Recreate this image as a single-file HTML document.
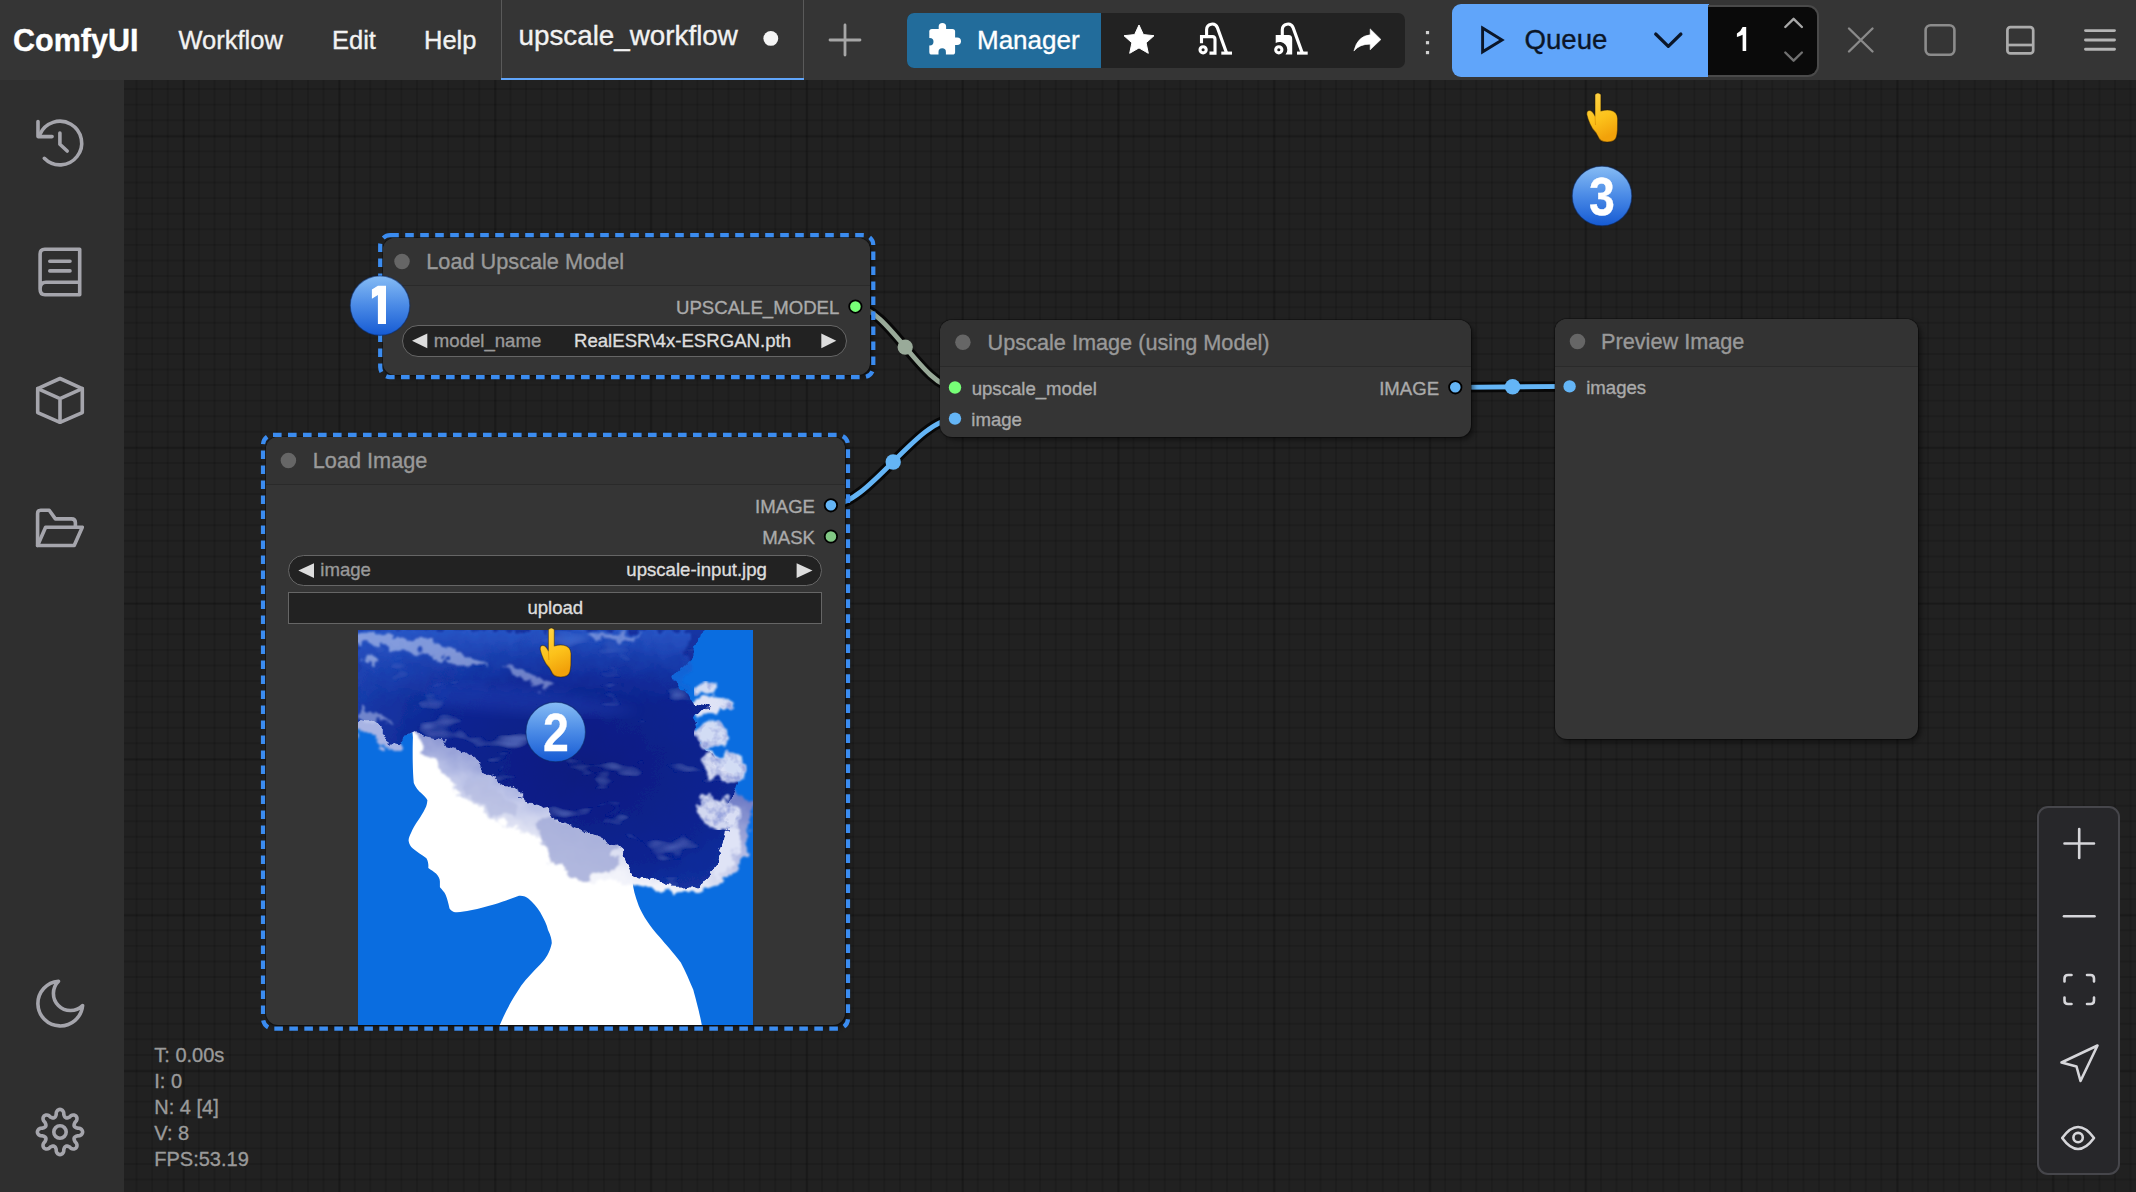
<!DOCTYPE html>
<html><head><meta charset="utf-8">
<style>
html,body{margin:0;padding:0;}
body{width:2136px;height:1192px;overflow:hidden;position:relative;background:#212121;font-family:"Liberation Sans",sans-serif;}
.a{position:absolute;box-sizing:border-box;}
.t{position:absolute;white-space:pre;font-family:"Liberation Sans",sans-serif;-webkit-text-stroke:0.35px currentColor;}
.dg{transform:scaleX(0.86);}
#header{left:0;top:0;width:2136px;height:80px;background:#353535;}
#sidebar{left:0;top:80px;width:124px;height:1112px;background:#2f2f2f;}
#canvas{left:124px;top:80px;width:2012px;height:1112px;background-color:#212121;
  background-image:
   linear-gradient(to right, rgba(0,0,0,0.15) 0, rgba(0,0,0,0.15) 1.6px, transparent 1.6px),
   linear-gradient(to bottom, rgba(0,0,0,0.15) 0, rgba(0,0,0,0.15) 1.6px, transparent 1.6px),
   linear-gradient(to right, rgba(0,0,0,0.12) 0, rgba(0,0,0,0.12) 1.6px, transparent 1.6px),
   linear-gradient(to bottom, rgba(0,0,0,0.12) 0, rgba(0,0,0,0.12) 1.6px, transparent 1.6px);
  background-size:155.8px 155.8px,155.8px 155.8px,15.58px 15.58px,15.58px 15.58px;
  background-position:59px 0, 0 55.7px, 11.6px 0, 0 8.1px;
}
.node{position:absolute;box-sizing:border-box;background:#353535;border-radius:12px;box-shadow:0 0 0 1px rgba(0,0,0,0.3),3px 3px 5px rgba(0,0,0,0.45);overflow:hidden;}
.node .title{position:absolute;left:0;top:0;right:0;background:#333333;border-bottom:1.6px solid #2a2a2a;box-sizing:border-box;}
.wcombo{position:absolute;box-sizing:border-box;background:#222222;border:1.6px solid #666666;border-radius:16px;}
.wbtn{position:absolute;box-sizing:border-box;background:#222222;border:1.6px solid #666666;}
</style></head>
<body>
<div id="header" class="a"></div>
<div id="sidebar" class="a"></div>
<div id="canvas" class="a"></div>

<!-- tab borders -->
<div class="a" style="left:500.5px;top:0;width:1.3px;height:80px;background:#5a5a5a"></div>
<div class="a" style="left:803.2px;top:0;width:1.3px;height:80px;background:#5a5a5a"></div>
<div class="a" style="left:501px;top:77.6px;width:303px;height:2.4px;background:#60a5fa"></div>

<!-- manager group -->
<div class="a" style="left:907px;top:13px;width:498px;height:55px;background:#222222;border-radius:7px"></div>
<div class="a" style="left:907px;top:13px;width:194px;height:55px;background:#226c9b;border-radius:7px 0 0 7px"></div>
<!-- queue -->
<div class="a" style="left:1452px;top:4px;width:257px;height:73px;background:#60a5fa;border-radius:9px 0 0 9px"></div>
<div class="a" style="left:1708px;top:4.5px;width:111px;height:72px;background:#0a0a0a;border:2.2px solid #4a4a4a;border-left:none;border-radius:0 11px 11px 0"></div>

<!-- LINKS (under nodes) -->
<svg class="a" style="left:0;top:0" width="2136" height="1192" viewBox="0 0 2136 1192">
 <g fill="none" stroke-linecap="round">
  <path d="M855.4 306.6 C887.4 306.6 923 387.5 955 387.5" stroke="#000" stroke-opacity="0.75" stroke-width="10.5"/>
  <path d="M855.4 306.6 C887.4 306.6 923 387.5 955 387.5" stroke="#99aa99" stroke-width="4.8"/>
  <path d="M830.9 505.3 C868.6 505.3 917.3 418.6 955 418.6" stroke="#000" stroke-opacity="0.75" stroke-width="10.5"/>
  <path d="M830.9 505.3 C868.6 505.3 917.3 418.6 955 418.6" stroke="#64b5f6" stroke-width="4.8"/>
  <path d="M1455.3 387.3 L1569.6 386.4" stroke="#000" stroke-opacity="0.75" stroke-width="10.5"/>
  <path d="M1455.3 387.3 L1569.6 386.4" stroke="#64b5f6" stroke-width="4.8"/>
 </g>
 <circle cx="905.2" cy="347.1" r="7.7" fill="#99aa99"/>
 <circle cx="893.2" cy="462" r="7.7" fill="#64b5f6"/>
 <circle cx="1512.6" cy="386.8" r="7.7" fill="#64b5f6"/>
</svg>

<!-- NODES -->
<div class="node" style="left:383px;top:238px;width:487px;height:137px"><div class="title" style="height:48.4px"></div></div>
<div class="node" style="left:940px;top:319.5px;width:530.5px;height:117.5px"><div class="title" style="height:47.6px"></div></div>
<div class="node" style="left:1554.5px;top:318.5px;width:363.5px;height:420px"><div class="title" style="height:48px"></div></div>
<div class="node" style="left:266px;top:437.3px;width:579px;height:587.7px"><div class="title" style="height:47.6px"></div></div>

<!-- widgets -->
<div class="wcombo" style="left:402px;top:325px;width:444.7px;height:32px"></div>
<div class="wcombo" style="left:288.2px;top:554.8px;width:533.7px;height:31.7px"></div>
<div class="wbtn" style="left:288.2px;top:592.4px;width:534.1px;height:31.9px"></div>

<!-- image -->
<svg class="a" style="left:358px;top:630px" width="395" height="395" viewBox="0 0 395 395">
 <defs>
  <clipPath id="pclip"><rect width="395" height="395"/></clipPath>
  <filter id="rough" x="-10%" y="-10%" width="120%" height="120%">
   <feTurbulence type="fractalNoise" baseFrequency="0.045" numOctaves="4" seed="4" result="n"/>
   <feDisplacementMap in="SourceGraphic" in2="n" scale="24" xChannelSelector="R" yChannelSelector="G"/>
  </filter>
  <filter id="rough2" x="-10%" y="-10%" width="120%" height="120%">
   <feTurbulence type="fractalNoise" baseFrequency="0.07" numOctaves="4" seed="11" result="n"/>
   <feDisplacementMap in="SourceGraphic" in2="n" scale="20" xChannelSelector="R" yChannelSelector="G" result="d"/>
   <feGaussianBlur in="d" stdDeviation="1.2"/>
  </filter>
  <filter id="soft"><feGaussianBlur stdDeviation="6"/></filter>
  <linearGradient id="topfade" x1="0" y1="0" x2="0" y2="1">
   <stop offset="0" stop-color="#2c5fd0" stop-opacity="0.75"/>
   <stop offset="0.5" stop-color="#2452c4" stop-opacity="0.35"/>
   <stop offset="1" stop-color="#1c40b0" stop-opacity="0"/>
  </linearGradient>
  <filter id="tex" x="0" y="0" width="100%" height="100%">
   <feTurbulence type="fractalNoise" baseFrequency="0.09" numOctaves="3" seed="3" result="n"/>
   <feColorMatrix in="n" type="matrix" values="0 0 0 0 0.30  0 0 0 0 0.36  0 0 0 0 0.72  0 0 0 -3 1.75" result="c"/>
   <feComposite in="c" in2="SourceAlpha" operator="in" result="ci"/>
   <feMerge><feMergeNode in="SourceGraphic"/><feMergeNode in="ci"/></feMerge>
  </filter>
  <filter id="tex2" x="0" y="0" width="100%" height="100%">
   <feTurbulence type="fractalNoise" baseFrequency="0.018 0.04" numOctaves="3" seed="7" result="n"/>
   <feColorMatrix in="n" type="matrix" values="0 0 0 0 0.14  0 0 0 0 0.22  0 0 0 0 0.66  0 0 0 -2.2 0.80" result="c"/>
   <feComposite in="c" in2="SourceAlpha" operator="in" result="ci"/>
   <feMerge><feMergeNode in="SourceGraphic"/><feMergeNode in="ci"/></feMerge>
  </filter>
  <linearGradient id="lz" x1="0" y1="1" x2="0.6" y2="0">
   <stop offset="0" stop-color="#ffffff"/>
   <stop offset="0.35" stop-color="#f2f3fa"/>
   <stop offset="0.6" stop-color="#b4bce4"/>
   <stop offset="0.85" stop-color="#6f7cc6"/>
   <stop offset="1" stop-color="#3a4cae"/>
  </linearGradient>
  <radialGradient id="cg" cx="0.6" cy="0.55" r="0.65">
   <stop offset="0" stop-color="#071a80"/>
   <stop offset="0.6" stop-color="#0c2592"/>
   <stop offset="1" stop-color="#1a3cab"/>
  </radialGradient>
 </defs>
 <g clip-path="url(#pclip)">
 <rect width="395" height="395" fill="#0a6de0"/>
 <path d="M54 96 L54.9 107.6 C54.5 120 54.5 140 55.8 153 C58 158 60 160 62.6 162.6 C66 166 68.5 168 69.4 170.3 C69 174 68.5 176 67.4 178 C65 183 63 186 60.7 189.6 C57 195 54.5 199 53 203.1 C51.5 206 50.5 208.5 50.6 210.8 C51 214 52.5 216.5 54.9 218.6 C59 222 64 225 68.4 228.2 C70.5 232 70.5 235 70.3 237.9 C73 240 76 241.5 78 243.6 C80.5 246.5 81.9 249 81.9 251.4 L81.9 257.2 C84 259.5 86.5 262 87.7 264.9 C89.5 269 90.5 274 91.5 278.4 C93.5 281 95.5 282 97.3 282.2 C102 282.5 107 281.5 112.8 280.3 C122 278.5 128 276.5 135.9 274.5 C145 272 153 268.5 161 265.8 C165 265.5 168 266.5 170.6 268.7 C175 272.5 179 277 182.2 282.2 C186 289 189 295 190 300 C193 306 194 311 193.7 313.6 C192 322 188 329 182.2 334.6 C175 342 169 348 163.3 355.6 C155 368 148 380 141.4 396 L344 396 C341 380 338 370 335.3 359.8 C331 350 328 342 322.8 332.5 C315 322 308 315 301.8 307.3 C292 296 285 286 280.8 275.9 C277 266 275 258 274.5 250.7 L240 200 L130 110 L70 92 Z" fill="#ffffff"/>
 <!-- light cloud zone -->
 <g><g filter="url(#rough2)">
  <path d="M50 98 C60 104 68 122 80 140 C95 158 110 172 130 184 C150 196 170 204 185 212 C195 222 200 236 209 246 C225 252 245 250 265 250 C280 252 285 258 295 260 C315 264 335 266 355 256 C372 246 385 232 390 212 L395 170 L300 150 L170 130 L90 100 Z" fill="url(#lz)"/>
  <path d="M0 70 C15 72 30 80 42 92 C45 100 44 112 40 120 C30 118 18 112 0 100 Z" fill="#a8b4e4"/>
  <path d="M178 196 C200 182 238 186 258 204 C266 224 252 246 226 249 C204 247 188 230 178 196 Z" fill="#a3abd8" opacity="0.85"/>
  <path d="M110 150 C130 150 150 165 160 185 C145 190 125 178 110 165 Z" fill="#b3bae0" opacity="0.7"/>
  <path d="M345 160 C360 170 372 190 380 205 C378 225 372 238 360 250 C352 240 346 225 340 205 Z" fill="#dfe3f6"/>
  <path d="M330 70 C345 62 360 65 368 72 C362 82 350 88 338 86 Z" fill="#dfe3f6"/>
  <path d="M350 120 C360 125 368 140 368 150 C360 148 352 140 345 128 Z" fill="#dfe3f6"/>
 </g></g>
 <!-- dark cloud -->
 <g filter="url(#tex2)"><g filter="url(#rough)">
  <path d="M-10 -10 L346 -10 C348 5 344 15 338 24 C330 32 320 38 316 45 C318 55 325 63 330 67 C338 70 345 68 350 72 C345 78 340 82 337 88 C338 98 341 108 343 115 C350 126 356 134 362 140 C370 144 378 143 380 150 C378 156 376 162 372 170 C372 180 374 190 372 200 C370 212 368 222 360 230 C352 240 345 252 336 258 C325 261 312 260 302 257 C296 254 293 250 288 249 C280 249 275 244 272 234 C268 220 250 210 235 204 C215 198 200 188 186 177 C170 168 155 158 144 150 C130 138 118 126 104 116 C90 110 75 108 62 104 C56 103 52 104 48 106 C44 110 42 116 40 118 C30 112 20 104 10 98 C5 95 0 93 -10 92 Z" fill="url(#cg)"/>
 </g></g>
 <rect x="0" y="0" width="330" height="75" fill="url(#topfade)" filter="url(#rough2)"/>
 <!-- right puffs -->
 <g filter="url(#tex)"><g filter="url(#rough2)" fill="#dde2f6" opacity="0.95">
  <path d="M336 56 C345 49 358 51 362 58 C356 64 345 64 336 61 Z"/>
  <path d="M361 70 C368 66 377 69 378 75 C371 80 364 79 361 74 Z"/>
  <path d="M336 100 C345 90 362 94 368 105 C370 113 363 121 350 119 C341 113 336 107 336 100 Z"/>
  <path d="M344 128 C360 120 382 125 390 135 C392 146 381 151 365 149 C351 146 344 139 344 128 Z"/>
  <path d="M336 174 C350 166 377 168 384 181 C382 193 371 201 355 199 C344 193 336 184 336 174 Z"/>
 </g></g>
 <!-- highlights -->
 <g filter="url(#rough2)" opacity="0.5">
  <path d="M0 3 C20 5 45 8 66 11 C85 14 105 22 128 38 C120 41 100 32 80 26 C55 20 30 16 0 13 Z" fill="#dfe5fa"/>
  <path d="M150 36 C165 40 180 46 195 56 C188 60 172 54 156 46 Z" fill="#c9d2f2"/>
  <path d="M225 2 C245 4 265 6 285 3 C276 11 256 13 236 9 Z" fill="#b8c4ee"/>
  <path d="M0 74 C10 77 20 85 30 95 C20 95 10 91 0 87 Z" fill="#c9d2f2"/>
  <path d="M6 26 C12 24 18 26 20 30 C15 33 9 32 6 29 Z" fill="#e6ebfb"/>
 </g>
 <g opacity="0.35" filter="url(#soft)">
  <path d="M70 55 C120 50 200 60 280 80 C250 90 160 85 80 75 Z" fill="#2a48c0"/>
 </g>
 </g>
</svg>

<!-- DOTS, ARROWS, SELECTION, ICONS -->
<svg class="a" style="left:0;top:0" width="2136" height="1192" viewBox="0 0 2136 1192">
 <!-- title dots -->
 <g fill="#666666">
  <circle cx="402" cy="261.6" r="7.75"/>
  <circle cx="962.9" cy="342.3" r="7.75"/>
  <circle cx="1577.5" cy="341.4" r="7.75"/>
  <circle cx="288.4" cy="460.5" r="7.75"/>
 </g>
 <!-- slots -->
 <circle cx="855.4" cy="306.6" r="6.2" fill="#77ff77" stroke="#000" stroke-width="1.8"/>
 <circle cx="955" cy="387.5" r="6.2" fill="#77ff77"/>
 <circle cx="955" cy="418.6" r="6.2" fill="#64b5f6"/>
 <circle cx="1455.3" cy="387.3" r="6.2" fill="#64b5f6" stroke="#000" stroke-width="1.8"/>
 <circle cx="1569.6" cy="386.4" r="6.2" fill="#64b5f6"/>
 <circle cx="830.9" cy="505.3" r="6.2" fill="#64b5f6" stroke="#000" stroke-width="1.8"/>
 <circle cx="830.9" cy="536.5" r="6.2" fill="#81c784" stroke="#000" stroke-width="1.8"/>
 <!-- combo arrows -->
 <g fill="#dddddd">
  <path d="M412 340.8 L427.3 333.4 L427.3 348.3 Z"/>
  <path d="M836.3 340.8 L821.3 333.4 L821.3 348.3 Z"/>
  <path d="M298.3 570.6 L314 563.2 L314 578 Z"/>
  <path d="M812.5 570.6 L796.6 563.2 L796.6 578 Z"/>
 </g>
 <!-- selection outlines -->
 <g fill="none" stroke="#3b8cf0" stroke-width="4.2" stroke-dasharray="8.6 6.4" stroke-linecap="butt">
  <rect x="380.2" y="235.1" width="493.1" height="142" rx="10"/>
  <rect x="263" y="434.9" width="585" height="593.7" rx="10"/>
 </g>
</svg>


<!-- HEADER ICONS -->
<svg class="a" style="left:0;top:0" width="2136" height="80" viewBox="0 0 2136 80">
 <!-- tab dot -->
 <circle cx="770.8" cy="38.4" r="7.4" fill="#f5f5f5"/>
 <!-- plus -->
 <path d="M845 25 V55 M830 40 H860" stroke="#a6a6a6" stroke-width="2.8" stroke-linecap="round" fill="none"/>
 <!-- puzzle -->
 <g fill="#ffffff">
  <rect x="929.3" y="28.9" width="25.8" height="25.6" rx="2.6"/>
  <path d="M938.7 29.5 V26.6 A3.7 3.7 0 0 1 946.1 26.6 V29.5 Z"/>
  <path d="M954.5 37.6 H957.2 A3.75 3.75 0 0 1 957.2 45.1 H954.5 Z"/>
 </g>
 <g fill="#226c9b">
  <circle cx="929.8" cy="41.8" r="3.7"/>
  <path d="M938.5 55 V52 A3.7 3.7 0 0 1 945.9 52 V55 Z"/>
 </g>
 <!-- star -->
 <path d="M1139 25 L1143.4 34.6 L1154 35.7 L1146.1 42.8 L1148.3 53.3 L1139 47.9 L1129.7 53.3 L1131.9 42.8 L1124 35.7 L1134.6 34.6 Z" fill="#ffffff" stroke="#ffffff" stroke-width="1" stroke-linejoin="round"/>
 <!-- vacuum 1 -->
 <g fill="none" stroke="#ffffff" stroke-width="3.1" stroke-linejoin="miter">
  <circle cx="1203.1" cy="49.8" r="3.1"/>
  <path d="M1201.5 43.2 V36.6 H1212.5 Q1215 36.6 1215 39.6 V53.1 H1209.5"/>
  <path d="M1206.6 36.6 V29.5 A5.6 5.6 0 0 1 1217.4 27.6 L1226.6 53.1"/>
  <path d="M1221.3 53.1 H1232"/>
 </g>
 <!-- vacuum 2 -->
 <g transform="translate(75.7 0)">
  <g fill="none" stroke="#ffffff" stroke-width="3.1">
   <circle cx="1203.1" cy="49.8" r="3.1"/>
   <path d="M1206.6 36.6 V29.5 A5.6 5.6 0 0 1 1217.4 27.6 L1226.6 53.1"/>
   <path d="M1221.3 53.1 H1232"/>
  </g>
  <path d="M1200 35.1 H1213 Q1216.5 35.1 1216.5 39 V54.6 H1209.8 A7.7 7.7 0 0 0 1200 43 Z" fill="#ffffff"/>
 </g>
 <!-- share -->
 <path d="M1380.9 39.5 L1370.2 28.9 V34.8 Q1357.5 36 1353.9 51 Q1360 43.8 1370.2 44.2 V49.8 Z" fill="#ffffff" stroke="#ffffff" stroke-width="0.6" stroke-linejoin="round"/>
 <!-- vertical dots -->
 <g fill="#d0d0d0">
  <rect x="1425.9" y="31" width="3.2" height="3.2"/>
  <rect x="1425.9" y="41.1" width="3.2" height="3.2"/>
  <rect x="1425.9" y="51" width="3.2" height="3.2"/>
 </g>
 <!-- play -->
 <path d="M1482.6 28 L1502 39.9 L1482.6 51.8 Z" fill="none" stroke="#0b1628" stroke-width="2.9" stroke-linejoin="miter"/>
 <!-- chevron down -->
 <path d="M1655.7 34 L1668.3 46.3 L1680.9 34" fill="none" stroke="#0b1628" stroke-width="3.2" stroke-linecap="round" stroke-linejoin="round"/>
 <!-- number up/down -->
 <path d="M1785.3 27 L1793.6 18.8 L1801.9 27" fill="none" stroke="#a8a8a8" stroke-width="2.4" stroke-linecap="round" stroke-linejoin="round"/>
 <path d="M1785.3 52.5 L1793.6 60.7 L1801.9 52.5" fill="none" stroke="#707070" stroke-width="2.4" stroke-linecap="round" stroke-linejoin="round"/>
 <!-- x -->
 <path d="M1849 28.5 L1872.5 51.5 M1872.5 28.5 L1849 51.5" stroke="#8a8a8a" stroke-width="2.4" stroke-linecap="round"/>
 <!-- square -->
 <rect x="1925.6" y="25.3" width="28.8" height="29.4" rx="5" fill="none" stroke="#8c8c8c" stroke-width="2.6"/>
 <!-- panel -->
 <rect x="2007.4" y="27.2" width="25.8" height="26.2" rx="3" fill="none" stroke="#acacac" stroke-width="2.7"/>
 <path d="M2007.4 45 H2033.2" stroke="#acacac" stroke-width="2.7"/>
 <!-- hamburger -->
 <path d="M2085.5 30.6 H2114.5 M2085.5 40 H2114.5 M2085.5 49.3 H2114.5" stroke="#b4b4b4" stroke-width="2.9" stroke-linecap="round"/>
</svg>

<!-- SIDEBAR ICONS -->
<svg class="a" style="left:0;top:80px" width="124" height="1112" viewBox="0 80 124 1112">
 <g fill="none" stroke="#a5a5ac" stroke-width="3.6" stroke-linecap="round" stroke-linejoin="round">
  <!-- history -->
  <path d="M39.8 134.6 A21.8 21.8 0 1 1 44.3 158.3"/>
  <path d="M38 121.5 V136.6 H52.1"/>
  <path d="M59.9 133.1 V144.2 L67.2 151"/>
  <!-- book -->
  <path d="M40.1 289 V254 Q40.1 249.3 44.8 249.3 H79.7 V294.8 H45 Q40.1 294.8 40.1 289 Q40.1 282.2 46 282.2 H79.7"/>
  <path d="M49.8 261.2 H70 M49.8 270.9 H70"/>
  <!-- cube -->
  <path d="M60 378.5 L82.3 388.6 V412.6 L60 422.3 L37.7 412.6 V388.6 Z"/>
  <path d="M37.7 388.6 L60 398.6 L82.3 388.6 M60 398.6 V422.3"/>
  <!-- folder open -->
  <path d="M37.6 545.5 V513.5 Q37.6 510.3 40.8 510.3 H49.2 L55.4 518.9 H71.5 Q75.4 518.9 75.4 522.8 V526.2"/>
  <path d="M37.6 545.5 H74.2 L82.3 527.2 H45.6 Z"/>
  <!-- moon -->
  <path d="M58.5 981.2 A15 15 0 0 0 82.6 1005.6 A22.4 22.4 0 1 1 58.5 981.2 Z"/>
  <!-- cog -->
  <circle cx="60" cy="1132" r="6.2"/>
  <path d="M60.00 1109.40 L60.71 1109.48 L61.40 1109.72 L62.07 1110.12 L62.69 1110.69 L63.25 1111.48 L63.69 1112.66 L63.86 1114.74 L64.19 1115.69 L64.53 1116.39 L64.89 1116.94 L65.27 1117.37 L65.68 1117.67 L66.12 1117.85 L66.62 1117.93 L67.19 1117.90 L67.83 1117.76 L68.57 1117.50 L69.47 1117.07 L71.06 1115.72 L72.21 1115.19 L73.16 1115.03 L74.01 1115.07 L74.76 1115.25 L75.42 1115.58 L75.98 1116.02 L76.42 1116.58 L76.75 1117.24 L76.93 1117.99 L76.97 1118.84 L76.81 1119.79 L76.28 1120.94 L74.93 1122.53 L74.50 1123.43 L74.24 1124.17 L74.10 1124.81 L74.07 1125.38 L74.15 1125.88 L74.33 1126.32 L74.63 1126.73 L75.06 1127.11 L75.61 1127.47 L76.31 1127.81 L77.26 1128.14 L79.34 1128.31 L80.52 1128.75 L81.31 1129.31 L81.88 1129.93 L82.28 1130.60 L82.52 1131.29 L82.60 1132.00 L82.52 1132.71 L82.28 1133.40 L81.88 1134.07 L81.31 1134.69 L80.52 1135.25 L79.34 1135.69 L77.26 1135.86 L76.31 1136.19 L75.61 1136.53 L75.06 1136.89 L74.63 1137.27 L74.33 1137.68 L74.15 1138.12 L74.07 1138.62 L74.10 1139.19 L74.24 1139.83 L74.50 1140.57 L74.93 1141.47 L76.28 1143.06 L76.81 1144.21 L76.97 1145.16 L76.93 1146.01 L76.75 1146.76 L76.42 1147.42 L75.98 1147.98 L75.42 1148.42 L74.76 1148.75 L74.01 1148.93 L73.16 1148.97 L72.21 1148.81 L71.06 1148.28 L69.47 1146.93 L68.57 1146.50 L67.83 1146.24 L67.19 1146.10 L66.62 1146.07 L66.12 1146.15 L65.68 1146.33 L65.27 1146.63 L64.89 1147.06 L64.53 1147.61 L64.19 1148.31 L63.86 1149.26 L63.69 1151.34 L63.25 1152.52 L62.69 1153.31 L62.07 1153.88 L61.40 1154.28 L60.71 1154.52 L60.00 1154.60 L59.29 1154.52 L58.60 1154.28 L57.93 1153.88 L57.31 1153.31 L56.75 1152.52 L56.31 1151.34 L56.14 1149.26 L55.81 1148.31 L55.47 1147.61 L55.11 1147.06 L54.73 1146.63 L54.32 1146.33 L53.88 1146.15 L53.38 1146.07 L52.81 1146.10 L52.17 1146.24 L51.43 1146.50 L50.53 1146.93 L48.94 1148.28 L47.79 1148.81 L46.84 1148.97 L45.99 1148.93 L45.24 1148.75 L44.58 1148.42 L44.02 1147.98 L43.58 1147.42 L43.25 1146.76 L43.07 1146.01 L43.03 1145.16 L43.19 1144.21 L43.72 1143.06 L45.07 1141.47 L45.50 1140.57 L45.76 1139.83 L45.90 1139.19 L45.93 1138.62 L45.85 1138.12 L45.67 1137.68 L45.37 1137.27 L44.94 1136.89 L44.39 1136.53 L43.69 1136.19 L42.74 1135.86 L40.66 1135.69 L39.48 1135.25 L38.69 1134.69 L38.12 1134.07 L37.72 1133.40 L37.48 1132.71 L37.40 1132.00 L37.48 1131.29 L37.72 1130.60 L38.12 1129.93 L38.69 1129.31 L39.48 1128.75 L40.66 1128.31 L42.74 1128.14 L43.69 1127.81 L44.39 1127.47 L44.94 1127.11 L45.37 1126.73 L45.67 1126.32 L45.85 1125.88 L45.93 1125.38 L45.90 1124.81 L45.76 1124.17 L45.50 1123.43 L45.07 1122.53 L43.72 1120.94 L43.19 1119.79 L43.03 1118.84 L43.07 1117.99 L43.25 1117.24 L43.58 1116.58 L44.02 1116.02 L44.58 1115.58 L45.24 1115.25 L45.99 1115.07 L46.84 1115.03 L47.79 1115.19 L48.94 1115.72 L50.53 1117.07 L51.43 1117.50 L52.17 1117.76 L52.81 1117.90 L53.38 1117.93 L53.88 1117.85 L54.32 1117.67 L54.73 1117.37 L55.11 1116.94 L55.47 1116.39 L55.81 1115.69 L56.14 1114.74 L56.31 1112.66 L56.75 1111.48 L57.31 1110.69 L57.93 1110.12 L58.60 1109.72 L59.29 1109.48 L60.00 1109.40 Z"/>
 </g>
</svg>

<!-- ZOOM PANEL -->
<div class="a" style="left:2037px;top:806px;width:82.5px;height:369px;background:#27272a;border:2px solid #46464b;border-radius:11px"></div>
<svg class="a" style="left:2037px;top:806px" width="83" height="369" viewBox="2037 806 83 369">
 <g fill="none" stroke="#d6d6da" stroke-width="2.6" stroke-linecap="round" stroke-linejoin="round">
  <path d="M2079.2 829 V858 M2064.5 843.5 H2094"/>
  <path d="M2064 916.3 H2094.5"/>
  <path d="M2064.5 981.5 V978.5 Q2064.5 975 2068 975 H2071.5 M2087 975 H2090.5 Q2094 975 2094 978.5 V981.5 M2094 997.5 V1000.5 Q2094 1004 2090.5 1004 H2087 M2071.5 1004 H2068 Q2064.5 1004 2064.5 1000.5 V997.5"/>
  <path d="M2061.5 1062.5 L2097.5 1045.5 L2080.5 1081 L2076.5 1066.5 Z"/>
  <path d="M2062.2 1138 Q2078 1116 2094 1138 Q2078 1160 2062.2 1138 Z"/>
  <circle cx="2078.1" cy="1137.6" r="4.7"/>
 </g>
</svg>


<!-- BADGES & HANDS -->
<svg class="a" style="left:0;top:0" width="2136" height="1192" viewBox="0 0 2136 1192">
 <defs>
  <linearGradient id="bg" x1="0" y1="0" x2="0" y2="1">
   <stop offset="0" stop-color="#86bcf5"/>
   <stop offset="0.5" stop-color="#4a8ae6"/>
   <stop offset="1" stop-color="#155ad3"/>
  </linearGradient>
  <linearGradient id="hg" x1="0" y1="0" x2="0.3" y2="1">
   <stop offset="0" stop-color="#ffd54a"/>
   <stop offset="0.6" stop-color="#fcc21b"/>
   <stop offset="1" stop-color="#f2a20a"/>
  </linearGradient>

 </defs>
 <g stroke="#0b2a66" stroke-opacity="0.55" stroke-width="1.2" fill="url(#bg)">
  <circle cx="380" cy="305.6" r="29.8"/>
  <circle cx="555.7" cy="732" r="29.8"/>
  <circle cx="1602" cy="196" r="29.8"/>
 </g>
 <path d="M377.9 285.8 H386 V324.1 H377.9 V294.9 L371.9 298.7 V289.6 Z" fill="#ffffff"/>
 <path d="M1742.6 27.1 H1746.2 V51 H1742.6 V34.8 Q1740 36.2 1736.9 36.9 V33.6 Q1741 31.5 1742.6 27.1 Z" fill="#ffffff"/>
 <g transform="translate(1575 85)">
   <path d="M20 9.5 Q22.9 6.5 25.9 9.5 L25.9 26 Q31 24.3 35.5 25.2 Q42.3 26.6 42.6 33.5 L42.5 45 Q42 50 41.4 52 Q40 57.2 32 57 Q24.5 57 23 51.5 L21 48 Q17 44 15 39 Q12.5 33 11.8 29.5 Q11.5 25.3 14.5 25.4 Q17.5 25.6 19.5 30 L20 31 Z" fill="url(#hg)" stroke="#2a1a00" stroke-opacity="0.45" stroke-width="1.1" stroke-linejoin="round"/>
   <path d="M20 31 L20.5 40" stroke="#d98a00" stroke-width="0.9" fill="none" opacity="0.7"/>
</g>
 <g transform="translate(528.4 620)">
   <path d="M20 9.5 Q22.9 6.5 25.9 9.5 L25.9 26 Q31 24.3 35.5 25.2 Q42.3 26.6 42.6 33.5 L42.5 45 Q42 50 41.4 52 Q40 57.2 32 57 Q24.5 57 23 51.5 L21 48 Q17 44 15 39 Q12.5 33 11.8 29.5 Q11.5 25.3 14.5 25.4 Q17.5 25.6 19.5 30 L20 31 Z" fill="url(#hg)" stroke="#2a1a00" stroke-opacity="0.45" stroke-width="1.1" stroke-linejoin="round"/>
   <path d="M20 31 L20.5 40" stroke="#d98a00" stroke-width="0.9" fill="none" opacity="0.7"/>
</g>
</svg>

<div class="t" style="left:13.0px;top:24.7px;font-size:30.5px;line-height:30.5px;color:#ffffff;font-weight:bold;">ComfyUI</div>
<div class="t" style="left:178.5px;top:27.6px;font-size:25.5px;line-height:25.5px;color:#f2f2f2;font-weight:normal;">Workflow</div>
<div class="t" style="left:332.0px;top:27.6px;font-size:25.5px;line-height:25.5px;color:#f2f2f2;font-weight:normal;">Edit</div>
<div class="t" style="left:424.0px;top:27.6px;font-size:25.5px;line-height:25.5px;color:#f2f2f2;font-weight:normal;">Help</div>
<div class="t" style="left:518.5px;top:21.7px;font-size:27.8px;line-height:27.8px;color:#f2f2f2;font-weight:normal;">upscale_workflow</div>
<div class="t" style="left:977.0px;top:26.8px;font-size:26px;line-height:26px;color:#ffffff;font-weight:normal;">Manager</div>
<div class="t" style="left:1524.5px;top:25.7px;font-size:27.6px;line-height:27.6px;color:#0b1628;font-weight:normal;">Queue</div>
<div class="t" style="left:426.3px;top:250.8px;font-size:21.7px;line-height:21.7px;color:#999999;font-weight:normal;">Load Upscale Model</div>
<div class="t" style="right:1296.7px;top:299.2px;font-size:18.6px;line-height:18.6px;color:#aaaaaa;font-weight:normal;">UPSCALE_MODEL</div>
<div class="t" style="left:433.8px;top:331.5px;font-size:18.6px;line-height:18.6px;color:#999999;font-weight:normal;">model_name</div>
<div class="t" style="right:1345.0px;top:331.5px;font-size:18.6px;line-height:18.6px;color:#dddddd;font-weight:normal;">RealESR\4x-ESRGAN.pth</div>
<div class="t" style="left:987.5px;top:331.5px;font-size:21.7px;line-height:21.7px;color:#999999;font-weight:normal;">Upscale Image (using Model)</div>
<div class="t" style="left:971.7px;top:379.8px;font-size:18.6px;line-height:18.6px;color:#aaaaaa;font-weight:normal;">upscale_model</div>
<div class="t" style="left:971.3px;top:410.9px;font-size:18.6px;line-height:18.6px;color:#aaaaaa;font-weight:normal;">image</div>
<div class="t" style="right:696.9px;top:379.6px;font-size:18.6px;line-height:18.6px;color:#aaaaaa;font-weight:normal;">IMAGE</div>
<div class="t" style="left:1601.0px;top:330.6px;font-size:21.7px;line-height:21.7px;color:#999999;font-weight:normal;">Preview Image</div>
<div class="t" style="left:1586.2px;top:378.7px;font-size:18.6px;line-height:18.6px;color:#aaaaaa;font-weight:normal;">images</div>
<div class="t" style="left:312.8px;top:449.7px;font-size:21.7px;line-height:21.7px;color:#999999;font-weight:normal;">Load Image</div>
<div class="t" style="right:1321.0px;top:497.7px;font-size:18.6px;line-height:18.6px;color:#aaaaaa;font-weight:normal;">IMAGE</div>
<div class="t" style="right:1321.0px;top:528.9px;font-size:18.6px;line-height:18.6px;color:#aaaaaa;font-weight:normal;">MASK</div>
<div class="t" style="left:320.3px;top:561.1px;font-size:18.6px;line-height:18.6px;color:#999999;font-weight:normal;">image</div>
<div class="t" style="right:1369.1px;top:561.1px;font-size:18.6px;line-height:18.6px;color:#dddddd;font-weight:normal;">upscale-input.jpg</div>
<div class="t" style="left:155.3px;width:800px;text-align:center;top:598.6px;font-size:18.6px;line-height:18.6px;color:#dddddd;font-weight:normal;">upload</div>
<div class="t" style="left:154.3px;top:1044.8px;font-size:20px;line-height:20px;color:#9a9a9a;font-weight:normal;">T: 0.00s</div>
<div class="t" style="left:154.3px;top:1070.8px;font-size:20px;line-height:20px;color:#9a9a9a;font-weight:normal;">I: 0</div>
<div class="t" style="left:154.3px;top:1096.8px;font-size:20px;line-height:20px;color:#9a9a9a;font-weight:normal;">N: 4 [4]</div>
<div class="t" style="left:154.3px;top:1122.8px;font-size:20px;line-height:20px;color:#9a9a9a;font-weight:normal;">V: 8</div>
<div class="t" style="left:154.3px;top:1148.8px;font-size:20px;line-height:20px;color:#9a9a9a;font-weight:normal;">FPS:53.19</div>
<div class="t" style="left:155.7px;width:800px;text-align:center;top:704.9px;font-size:54px;line-height:54px;color:#ffffff;font-weight:bold;transform:scaleX(0.86);">2</div>
<div class="t" style="left:1201.8px;width:800px;text-align:center;top:168.9px;font-size:54px;line-height:54px;color:#ffffff;font-weight:bold;transform:scaleX(0.86);">3</div>

</body></html>
